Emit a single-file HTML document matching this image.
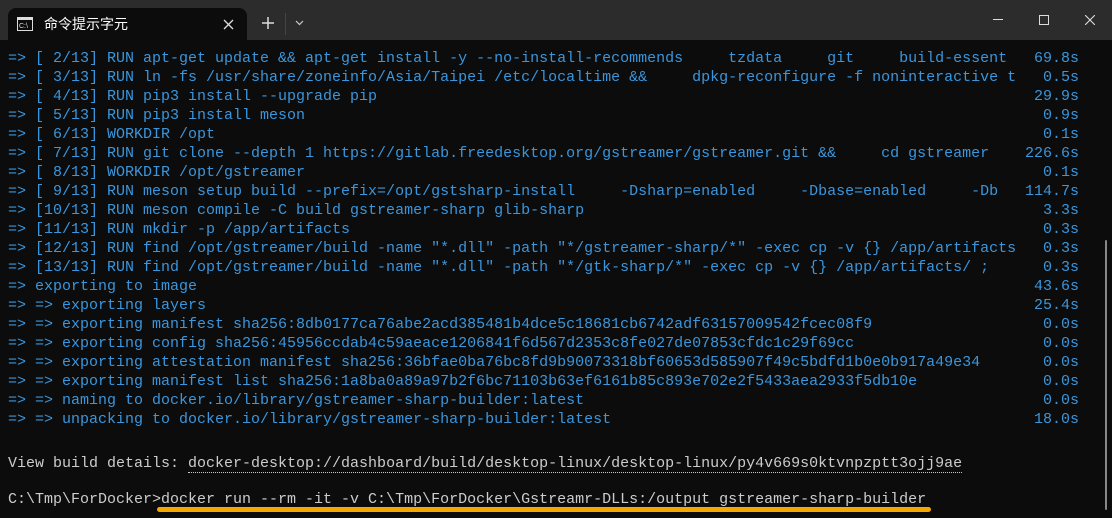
<!DOCTYPE html><html><head><meta charset="utf-8"><style>
body{margin:0;width:1112px;height:518px;background:#0c0c0c;overflow:hidden;position:relative;font-family:"Liberation Mono",monospace;}
.tb{position:absolute;left:0;top:0;width:1112px;height:40px;background:#2c2c2c;}
.tab{position:absolute;left:8px;top:8px;width:239px;height:32px;background:#0c0c0c;border-radius:8px 8px 0 0;}
.t{position:absolute;left:8px;top:49px;width:1071px;font-size:15px;line-height:19px;color:#3a96dd;}
.l{display:flex;justify-content:space-between;height:19px}
.l span{white-space:pre}
.w{position:absolute;left:8px;font-size:15px;line-height:19px;color:#cccccc;white-space:pre;}
</style></head><body>
<div class="tb"></div>
<div class="tab">
<svg style="position:absolute;left:9px;top:9px" width="16" height="14"><rect x="0.5" y="0.5" width="15" height="13" fill="none" stroke="#ddd"/><rect x="1" y="1" width="14" height="2" fill="#ddd"/><text x="2" y="11" font-size="7" fill="#ddd" font-family="Liberation Sans">C:\</text></svg>
<span style="position:absolute;left:36px;top:6px;color:#fff;font-size:14px;font-family:'Liberation Sans','Noto Sans CJK SC',sans-serif">命令提示字元</span>
<svg style="position:absolute;left:215px;top:11px" width="11" height="11"><path d="M1 1L10 10M10 1L1 10" stroke="#ddd" stroke-width="1.3"/></svg>
</div>
<svg style="position:absolute;left:262px;top:17px" width="12" height="12"><path d="M6 0V12M0 6H12" stroke="#ddd" stroke-width="1.5"/></svg>
<div style="position:absolute;left:285px;top:13px;width:1px;height:22px;background:#444"></div>
<svg style="position:absolute;left:295px;top:20px" width="9" height="6"><path d="M1 1L4.5 4.5L8 1" stroke="#ccc" fill="none" stroke-width="1.2"/></svg>
<div style="position:absolute;left:993px;top:19px;width:10px;height:1px;background:#ddd"></div>
<div style="position:absolute;left:1039px;top:15px;width:8px;height:8px;border:1px solid #ddd"></div>
<svg style="position:absolute;left:1085px;top:15px" width="10" height="10"><path d="M0 0L10 10M10 0L0 10" stroke="#ddd" stroke-width="1.1"/></svg>
<div class="t"><div class="l"><span>=> [ 2/13] RUN apt-get update &amp;&amp; apt-get install -y --no-install-recommends     tzdata     git     build-essent</span><span>69.8s</span></div><div class="l"><span>=> [ 3/13] RUN ln -fs /usr/share/zoneinfo/Asia/Taipei /etc/localtime &amp;&amp;     dpkg-reconfigure -f noninteractive t</span><span>0.5s</span></div><div class="l"><span>=> [ 4/13] RUN pip3 install --upgrade pip</span><span>29.9s</span></div><div class="l"><span>=> [ 5/13] RUN pip3 install meson</span><span>0.9s</span></div><div class="l"><span>=> [ 6/13] WORKDIR /opt</span><span>0.1s</span></div><div class="l"><span>=> [ 7/13] RUN git clone --depth 1 https://gitlab.freedesktop.org/gstreamer/gstreamer.git &amp;&amp;     cd gstreamer</span><span>226.6s</span></div><div class="l"><span>=> [ 8/13] WORKDIR /opt/gstreamer</span><span>0.1s</span></div><div class="l"><span>=> [ 9/13] RUN meson setup build --prefix=/opt/gstsharp-install     -Dsharp=enabled     -Dbase=enabled     -Db</span><span>114.7s</span></div><div class="l"><span>=> [10/13] RUN meson compile -C build gstreamer-sharp glib-sharp</span><span>3.3s</span></div><div class="l"><span>=> [11/13] RUN mkdir -p /app/artifacts</span><span>0.3s</span></div><div class="l"><span>=> [12/13] RUN find /opt/gstreamer/build -name "*.dll" -path "*/gstreamer-sharp/*" -exec cp -v {} /app/artifacts</span><span>0.3s</span></div><div class="l"><span>=> [13/13] RUN find /opt/gstreamer/build -name "*.dll" -path "*/gtk-sharp/*" -exec cp -v {} /app/artifacts/ ;</span><span>0.3s</span></div><div class="l"><span>=> exporting to image</span><span>43.6s</span></div><div class="l"><span>=> => exporting layers</span><span>25.4s</span></div><div class="l"><span>=> => exporting manifest sha256:8db0177ca76abe2acd385481b4dce5c18681cb6742adf63157009542fcec08f9</span><span>0.0s</span></div><div class="l"><span>=> => exporting config sha256:45956ccdab4c59aeace1206841f6d567d2353c8fe027de07853cfdc1c29f69cc</span><span>0.0s</span></div><div class="l"><span>=> => exporting attestation manifest sha256:36bfae0ba76bc8fd9b90073318bf60653d585907f49c5bdfd1b0e0b917a49e34</span><span>0.0s</span></div><div class="l"><span>=> => exporting manifest list sha256:1a8ba0a89a97b2f6bc71103b63ef6161b85c893e702e2f5433aea2933f5db10e</span><span>0.0s</span></div><div class="l"><span>=> => naming to docker.io/library/gstreamer-sharp-builder:latest</span><span>0.0s</span></div><div class="l"><span>=> => unpacking to docker.io/library/gstreamer-sharp-builder:latest</span><span>18.0s</span></div></div>
<div class="w" style="top:454px">View build details: <span style="border-bottom:1px dotted #ccc">docker-desktop://dashboard/build/desktop-linux/desktop-linux/py4v669s0ktvnpzptt3ojj9ae</span></div>
<div class="w" style="top:490px">C:\Tmp\ForDocker>docker run --rm -it -v C:\Tmp\ForDocker\Gstreamr-DLLs:/output gstreamer-sharp-builder</div>
<div style="position:absolute;left:157px;top:507px;width:774px;height:5px;border-radius:3px;background:#f5a800"></div>
<div style="position:absolute;left:1105px;top:240px;width:2px;height:270px;background:#888;border-radius:1px"></div>
</body></html>
